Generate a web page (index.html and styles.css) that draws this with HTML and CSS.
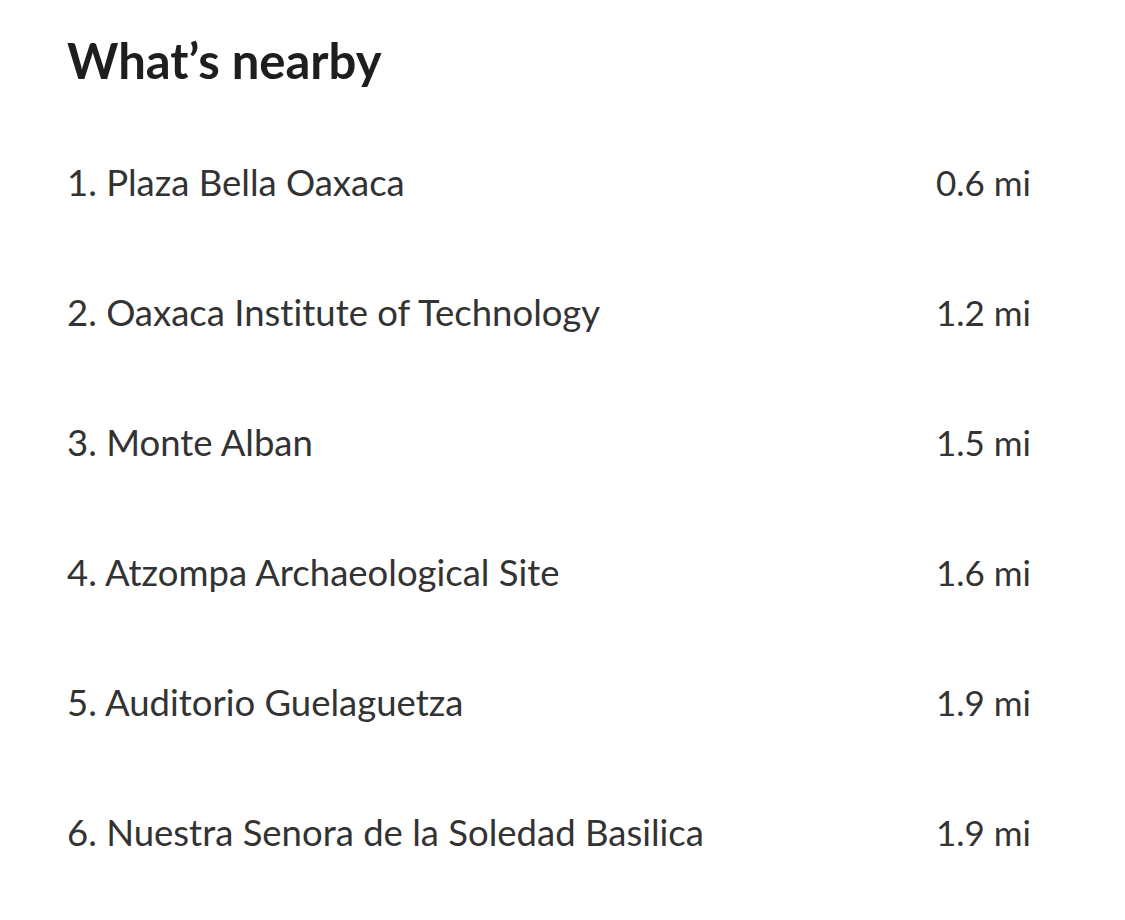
FILE: index.html
```html
<!DOCTYPE html>
<html lang="en">
<head>
<meta charset="utf-8">
<title>What's nearby</title>
<link rel="stylesheet" href="styles.css">
</head>
<body>
<section class="nearby">
  <h2 class="nearby-title">What’s nearby</h2>
  <ol class="nearby-list">
    <li class="nearby-item"><span class="name">1. Plaza Bella Oaxaca</span><span class="dist">0.6 mi</span></li>
    <li class="nearby-item"><span class="name">2. Oaxaca Institute of Technology</span><span class="dist">1.2 mi</span></li>
    <li class="nearby-item"><span class="name">3. Monte Alban</span><span class="dist">1.5 mi</span></li>
    <li class="nearby-item"><span class="name">4. Atzompa Archaeological Site</span><span class="dist">1.6 mi</span></li>
    <li class="nearby-item"><span class="name">5. Auditorio Guelaguetza</span><span class="dist">1.9 mi</span></li>
    <li class="nearby-item"><span class="name">6. Nuestra Senora de la Soledad Basilica</span><span class="dist">1.9 mi</span></li>
  </ol>
</section>
</body>
</html>
```
FILE: styles.css
```css
html, body {
  margin: 0;
  padding: 0;
  background: #ffffff;
}
body {
  font-family: Lato, "Open Sans", sans-serif;
  color: #333333;
  font-variant-ligatures: none;
}
.nearby {
  padding: 32px 94px 0 67px;
}
.nearby-title {
  margin: 0;
  font-size: 49px;
  font-weight: 700;
  line-height: 56px;
  color: #1e1e1e;
}
.nearby-list {
  list-style: none;
  margin: 29px 0 0 0;
  padding: 0;
}
.nearby-item {
  display: flex;
  justify-content: space-between;
  align-items: center;
  height: 130px;
  font-size: 36.5px;
  line-height: 42px;
}
.dist {
  white-space: nowrap;
  font-size: 35px;
}
```
